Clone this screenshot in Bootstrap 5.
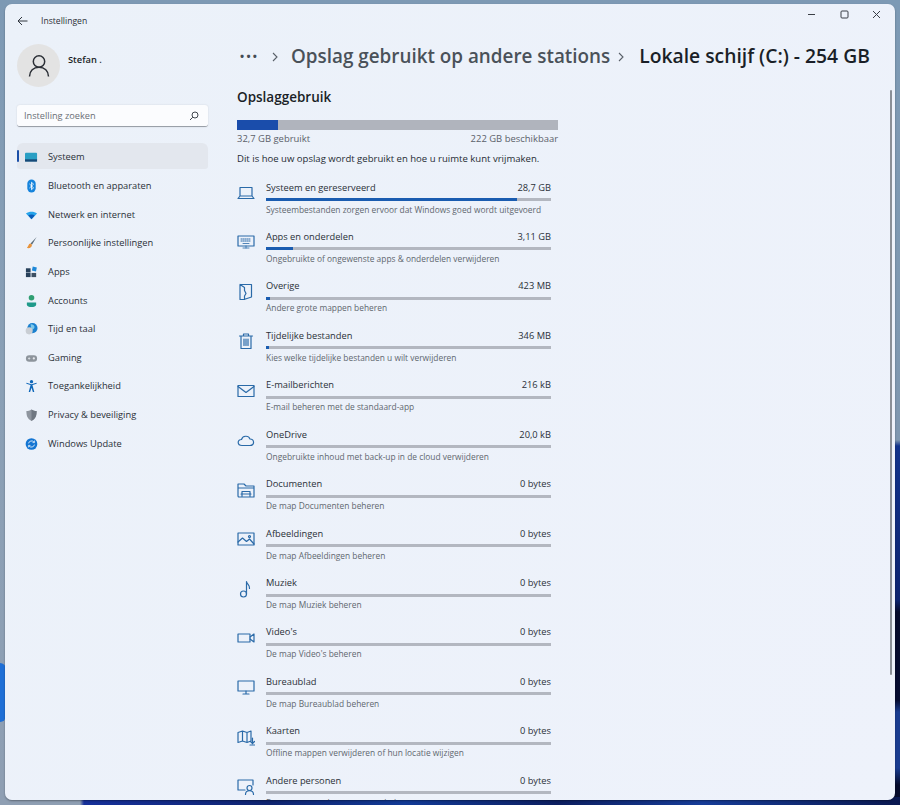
<!DOCTYPE html>
<html lang="nl">
<head>
<meta charset="utf-8">
<title>Instellingen</title>
<link href="https://cdn.jsdelivr.net/npm/bootstrap@5.3.0/dist/css/bootstrap.min.css" rel="stylesheet">
<style>
html,body{height:805px;overflow:hidden}
body{font-family:"Open Sans","Liberation Sans",sans-serif;color:#1c2430;background:linear-gradient(180deg,#7d99b4 0,#8aa0b6 45%,#8f9fb3 100%);position:relative}
.desk-right{position:absolute;right:0;top:0;bottom:0;width:12px;background:linear-gradient(180deg,#7d9ab5 0,#8098b0 440px,#12338c 446px,#0d2470 600px,#050a2a 612px,#060c30 700px,#1a3c90 712px,#1a3c90 768px,#050a2a 785px)}
.desk-bottom{position:absolute;left:0;right:0;bottom:0;height:8px;background:linear-gradient(90deg,#8f9fb3 0,#8f9fb3 80px,#16309a 84px,#0f2470 30%,#123a96 45%,#0c1e60 62%,#163c98 78%,#0a1850 100%)}
.desk-arc{position:absolute;left:0;top:663px;width:6px;height:59px;background:#1f6fd6;border-radius:0 30px 30px 0}
.win{position:absolute;left:5px;top:4px;width:890px;height:796px;background:linear-gradient(120deg,#ebf1f9,#eef2fb);border-radius:7px;overflow:hidden;box-shadow:0 1px 2px rgba(0,0,0,.35);display:flex;flex-direction:column}
.titlebar{height:26px;flex:none;padding-left:12px;padding-top:8px}
.apptitle{font-size:8.6px;color:#2b3038;margin-left:13px}
.winbtns{position:absolute;right:2px;top:0;display:flex}
.winbtn{width:32.5px;height:20px;display:flex;align-items:center;justify-content:center}
.winbody{flex:1 1 auto;display:flex;min-height:0}
.side{width:232px;flex:none;padding-left:12px}
.profile{margin-top:14px}
.avatar{width:43px;height:43px;border-radius:50%;background:#e3e3e3;display:flex;align-items:center;justify-content:center;flex:none}
.uname{font-size:9.3px;font-weight:600;color:#1a1f27;margin-left:8px;margin-top:-12px}
.search{width:191px;height:22px;margin-top:18px;background:#fbfcfe;border-radius:3px;border-bottom:1px solid #9aa0a8;box-shadow:0 0 2px rgba(0,0,0,.12);font-size:9.2px;color:#6a6f76;padding:0 9px 0 7px}
.navlist{margin-top:16px;width:191px;--bs-list-group-bg:transparent;--bs-list-group-border-width:0;overflow:visible}
.navitem{height:28.65px;display:flex;align-items:center;font-size:9.3px;color:#2a3038;padding:0 0 0 8px;border-radius:3px;position:relative;background:transparent}
.navitem.act{background:#e3e7ee;height:26px;margin-bottom:2.65px;padding-top:2px}
.navitem.act::before{content:"";position:absolute;left:0;top:7px;width:2px;height:12px;background:#1b4fa8;border-radius:1px}
.navico{width:13px;height:14px;flex:none;margin-right:10px;display:block}
.mainp{flex:1 1 auto;position:relative;min-width:0}
.crumb{height:33px;margin-top:10px;font-weight:600;white-space:nowrap;color:#4a5159}
.crumb-a{font-size:18.85px}
.crumb-b{font-size:19.3px;color:#1a1f27}
.dots{font-size:11px;font-weight:700;letter-spacing:2.3px;color:#444b54;width:25px;margin-left:3px;margin-right:7px}
.sep{margin-right:13px;flex:none}
.sep2{margin-left:8px;margin-right:15px;flex:none}
.h-sec{font-size:13.5px;font-weight:600;color:#1a1f27;margin:14px 0 0;line-height:20px}
.wrap{width:321px}
.capbar{--bs-progress-height:10px;--bs-progress-bg:#b0b4bd;--bs-progress-bar-bg:#1a4dab;--bs-progress-border-radius:0;margin-top:13px}
.capline{font-size:9.45px;color:#5b616a;line-height:13px;margin-top:1.5px}
.intro{font-size:9.55px;color:#262c34;margin:7.5px 0 0;line-height:13px;white-space:nowrap}
.rows{margin-top:15.5px}
.urow{display:flex;height:49.45px}
.uico{width:18px;height:18px;flex:none;margin:3.5px 11px 0 0;display:block}
.ubody{width:285px}
.utop{font-size:9.3px;line-height:13px;color:#2a3038;display:flex;justify-content:space-between}
.ubar{--bs-progress-height:3px;--bs-progress-bg:#b3b7c0;--bs-progress-bar-bg:#1a5cb0;--bs-progress-border-radius:0;margin-top:4.5px}
.udesc{font-size:8.4px;line-height:11px;color:#61676f;margin-top:2.5px;white-space:nowrap}
.sbar{position:absolute;right:3px;top:60px;width:2px;height:585px;background:#8a8f97;border-radius:1px}
svg.st{fill:none;stroke:#2a6aa8;stroke-width:1.2;stroke-linejoin:round;stroke-linecap:round}
</style>
</head>
<body>
<div class="desk-right"></div>
<div class="desk-bottom"></div>
<div class="desk-arc"></div>
<div class="win">
  <div class="titlebar d-flex align-items-center">
    <svg width="11" height="10" viewBox="0 0 11 10" fill="none" stroke="#30363e" stroke-width="1"><path d="M10.500 5H1M5 1 1 5l4 4"/></svg>
    <span class="apptitle">Instellingen</span>
  </div>
  <div class="winbtns">
    <div class="winbtn"><svg width="9" height="9" viewBox="0 0 9 9" stroke="#3a3f46" stroke-width="1"><path d="M1 4.500h7"/></svg></div>
    <div class="winbtn"><svg width="9" height="9" viewBox="0 0 9 9" fill="none" stroke="#3a3f46" stroke-width="1"><rect x="1" y="1" width="7" height="7" rx="1"/></svg></div>
    <div class="winbtn"><svg width="9" height="9" viewBox="0 0 9 9" stroke="#3a3f46" stroke-width="1"><path d="m1 1 7 7M8 1 1 8"/></svg></div>
  </div>
  <div class="winbody">
    <aside class="side">
      <div class="d-flex align-items-center profile">
        <div class="avatar"><svg width="22" height="24" viewBox="0 0 22 24" fill="none" stroke="#2b2f36" stroke-width="1.500"><circle cx="11" cy="7.500" r="5.700"/><path d="M1.500 22.500c0-5.500 4-9.300 9.500-9.300s9.500 3.800 9.500 9.300"/></svg></div>
        <div class="uname">Stefan .</div>
      </div>
      <div class="search d-flex align-items-center justify-content-between">
        <span>Instelling zoeken</span>
        <svg width="10" height="10" viewBox="0 0 10 10" fill="none" stroke="#40464e" stroke-width="1"><circle cx="6" cy="4" r="3"/><path d="M3.800 6.200 1 9"/></svg>
      </div>
      <div class="list-group navlist">
        <div class="list-group-item navitem act">
          <svg class="navico" viewBox="0 0 14 14"><rect x="0" y="2.500" width="13" height="9" rx="1" fill="#2a9fc4"/><rect x="0" y="9.500" width="13" height="2.500" fill="#174a78"/></svg>Systeem</div>
        <div class="list-group-item navitem">
          <svg class="navico" viewBox="0 0 14 14"><rect x="2.500" y="0" width="9" height="14" rx="4.500" fill="#1583dc"/><path d="M4.800 4.800 9.200 9 7 11V3l2.200 2L4.800 9.200" fill="none" stroke="#fff" stroke-width=".9"/></svg>Bluetooth en apparaten</div>
        <div class="list-group-item navitem">
          <svg class="navico" viewBox="0 0 14 14"><path d="M1 5.500C4.500 2.800 9.500 2.800 13 5.500L7 11.500z" fill="#27a4ea"/><path d="M3.500 7.500c2-1.300 5-1.300 7 0L7 11.500z" fill="#0c5cb8"/></svg>Netwerk en internet</div>
        <div class="list-group-item navitem">
          <svg class="navico" viewBox="0 0 14 14"><path d="M12.500 .5 6 7.500 7.500 9z" fill="#5a6b78"/><path d="M5.800 7.500C3.500 8 4 10 2 12.500c3 .5 5.500-.5 5.500-3.500z" fill="#e8943c"/></svg>Persoonlijke instellingen</div>
        <div class="list-group-item navitem">
          <svg class="navico" viewBox="0 0 14 14"><rect x="1" y="3" width="5" height="4.500" fill="#27405a"/><rect x="1" y="8" width="5" height="4.500" fill="#27405a"/><rect x="7" y="8" width="5" height="4.500" fill="#3c4f63"/><rect x="8" y="1.500" width="4.500" height="4.500" transform="rotate(12 10 3)" fill="#1e88d8"/></svg>Apps</div>
        <div class="list-group-item navitem">
          <svg class="navico" viewBox="0 0 14 14"><circle cx="7" cy="3.500" r="3" fill="#2f9e72"/><path d="M2 8.500h10v2.500c0 1.500-2.500 2.500-5 2.500s-5-1-5-2.500z" fill="#1f9a8a"/></svg>Accounts</div>
        <div class="list-group-item navitem">
          <svg class="navico" viewBox="0 0 14 14"><circle cx="8" cy="6" r="5.500" fill="#1a80cf"/><path d="M6 2c3 0 5 1.800 4 4-.5 1.500-2.500 1-3 3z" fill="#7cc8ea"/><circle cx="4.500" cy="9" r="3.800" fill="#c9ced4"/></svg>Tijd en taal</div>
        <div class="list-group-item navitem">
          <svg class="navico" viewBox="0 0 14 14"><rect x="1" y="4" width="12" height="7" rx="3.500" fill="#8d949c"/><path d="M3.200 7.500h2.500M4.500 6.300v2.500" stroke="#e6e9ee" stroke-width=".8"/><circle cx="9.500" cy="7.500" r="1.200" fill="#e6e9ee"/></svg>Gaming</div>
        <div class="list-group-item navitem">
          <svg class="navico" viewBox="0 0 14 14"><circle cx="7" cy="2.300" r="1.800" fill="#0d66b8"/><path d="M1.500 4.500 6 6 4 13.500h1.500L7 9l1.500 4.500H10L8 6l4.500-1.500V3.500L7 5 1.500 3.500z" fill="#0d66b8"/></svg>Toegankelijkheid</div>
        <div class="list-group-item navitem">
          <svg class="navico" viewBox="0 0 14 14"><path d="M7 1c2 1.300 3.500 1.700 5.500 1.800 0 5-1 8.500-5.500 10.700C2.500 11.300 1.500 7.800 1.500 2.800 3.500 2.700 5 2.300 7 1z" fill="#8e959e"/><path d="M7 1c2 1.300 3.500 1.700 5.500 1.800 0 5-1 8.500-5.500 10.700z" fill="#6f7781"/></svg>Privacy &amp; beveiliging</div>
        <div class="list-group-item navitem">
          <svg class="navico" viewBox="0 0 14 14"><circle cx="7" cy="7" r="6.300" fill="#1475d2"/><path d="M3.800 6.300A3.400 3.400 0 0 1 9.800 5M10.200 7.700A3.400 3.400 0 0 1 4.200 9" fill="none" stroke="#dcebf8" stroke-width="1"/><path d="M10.300 3.300v2.200H8.100M3.700 10.700V8.500h2.200" fill="none" stroke="#dcebf8" stroke-width=".9"/></svg>Windows Update</div>
      </div>
    </aside>
    <main class="mainp">
      <div class="crumb d-flex align-items-center">
        <span class="dots">•••</span>
        <svg class="sep" width="6" height="10" viewBox="0 0 6 10" fill="none" stroke="#5a616a" stroke-width="1.100"><path d="m1 1 4 4-4 4"/></svg>
        <span class="crumb-a">Opslag gebruikt op andere stations</span>
        <svg class="sep2" width="6" height="10" viewBox="0 0 6 10" fill="none" stroke="#5a616a" stroke-width="1.100"><path d="m1 1 4 4-4 4"/></svg>
        <span class="crumb-b">Lokale schijf (C:) - 254 GB</span>
      </div>
      <h2 class="h-sec">Opslaggebruik</h2>
      <div class="wrap">
        <div class="progress capbar"><div class="progress-bar" style="width:12.900%"></div></div>
        <div class="capline d-flex justify-content-between"><span>32,7 GB gebruikt</span><span>222 GB beschikbaar</span></div>
        <p class="intro">Dit is hoe uw opslag wordt gebruikt en hoe u ruimte kunt vrijmaken.</p>
      </div>
      <div class="rows">
        <div class="urow"><svg class="uico st" viewBox="0 0 18 18"><path d="M3 3.500h12v8.500H3zM3 12l-2 2.500h16L15 12"/></svg><div class="ubody"><div class="utop"><span>Systeem en gereserveerd</span><span>28,7 GB</span></div><div class="progress ubar"><div class="progress-bar" style="width:88%"></div></div><div class="udesc">Systeembestanden zorgen ervoor dat Windows goed wordt uitgevoerd</div></div></div>
        <div class="urow"><svg class="uico st" viewBox="0 0 18 18"><rect x="1" y="3" width="16" height="10"/><path d="M4 6h10M4 8h10" stroke-width="1" stroke-dasharray="1 1"/><path d="M6 10.500h6M6 15h6M9 13v2" stroke-width=".8"/></svg><div class="ubody"><div class="utop"><span>Apps en onderdelen</span><span>3,11 GB</span></div><div class="progress ubar"><div class="progress-bar" style="width:9.500%"></div></div><div class="udesc">Ongebruikte of ongewenste apps &amp; onderdelen verwijderen</div></div></div>
        <div class="urow"><svg class="uico st" viewBox="0 0 18 18"><path d="M3 1.500h11.500v12.500L7 16.500H3zM3 1.500 7.500 4.500v3l1.500 3-1.500 2.500v3.500"/></svg><div class="ubody"><div class="utop"><span>Overige</span><span>423 MB</span></div><div class="progress ubar"><div class="progress-bar" style="width:1.300%"></div></div><div class="udesc">Andere grote mappen beheren</div></div></div>
        <div class="urow"><svg class="uico st" viewBox="0 0 18 18"><path d="M2.500 4h13M6.500 4V2h5v2M4 4v12.500h10V4M7 7v6.500M9 7v6.500M11 7v6.500"/></svg><div class="ubody"><div class="utop"><span>Tijdelijke bestanden</span><span>346 MB</span></div><div class="progress ubar"><div class="progress-bar" style="width:1%"></div></div><div class="udesc">Kies welke tijdelijke bestanden u wilt verwijderen</div></div></div>
        <div class="urow"><svg class="uico st" viewBox="0 0 18 18"><rect x="1" y="3.500" width="16" height="11"/><path d="m1 4.500 8 6 8-6"/></svg><div class="ubody"><div class="utop"><span>E-mailberichten</span><span>216 kB</span></div><div class="progress ubar"><div class="progress-bar" style="width:0"></div></div><div class="udesc">E-mail beheren met de standaard-app</div></div></div>
        <div class="urow"><svg class="uico st" viewBox="0 0 18 18"><path d="M5 14.500c-5 0-5-6-.5-6 1-4 7-4.500 8.500-.5 4.500 0 5 6.500 0 6.500z"/></svg><div class="ubody"><div class="utop"><span>OneDrive</span><span>20,0 kB</span></div><div class="progress ubar"><div class="progress-bar" style="width:0"></div></div><div class="udesc">Ongebruikte inhoud met back-up in de cloud verwijderen</div></div></div>
        <div class="urow"><svg class="uico st" viewBox="0 0 18 18"><path d="M1 3h6l2 2h8v11H2a1 1 0 0 1-1-1zM1 7h16M5 15v-4.500h8V15M4 13h10"/></svg><div class="ubody"><div class="utop"><span>Documenten</span><span>0 bytes</span></div><div class="progress ubar"><div class="progress-bar" style="width:0"></div></div><div class="udesc">De map Documenten beheren</div></div></div>
        <div class="urow"><svg class="uico st" viewBox="0 0 18 18"><rect x="1" y="3" width="16" height="12"/><path d="m1 12 4.500-4 4 3.500 3-2.500 4.500 5"/><circle cx="12.500" cy="6.500" r="1"/></svg><div class="ubody"><div class="utop"><span>Afbeeldingen</span><span>0 bytes</span></div><div class="progress ubar"><div class="progress-bar" style="width:0"></div></div><div class="udesc">De map Afbeeldingen beheren</div></div></div>
        <div class="urow"><svg class="uico st" viewBox="0 0 18 18"><circle cx="6.500" cy="14" r="3"/><path d="M9.500 14V1.500c.5 3 3.500 3.500 3 7"/></svg><div class="ubody"><div class="utop"><span>Muziek</span><span>0 bytes</span></div><div class="progress ubar"><div class="progress-bar" style="width:0"></div></div><div class="udesc">De map Muziek beheren</div></div></div>
        <div class="urow"><svg class="uico st" viewBox="0 0 18 18"><rect x="1" y="5" width="12" height="8"/><path d="M13 8l4-3v8l-4-3"/></svg><div class="ubody"><div class="utop"><span>Video's</span><span>0 bytes</span></div><div class="progress ubar"><div class="progress-bar" style="width:0"></div></div><div class="udesc">De map Video's beheren</div></div></div>
        <div class="urow"><svg class="uico st" viewBox="0 0 18 18"><rect x="1" y="3" width="16" height="10"/><path d="M9 13v3M6 16h6"/></svg><div class="ubody"><div class="utop"><span>Bureaublad</span><span>0 bytes</span></div><div class="progress ubar"><div class="progress-bar" style="width:0"></div></div><div class="udesc">De map Bureaublad beheren</div></div></div>
        <div class="urow"><svg class="uico st" viewBox="0 0 18 18"><path d="M1 4.500 5.500 3l4.500 1.500L14 3v10l-4 1.500L5.500 13 1 14.500zM5.500 3v10M10 4.500v10M15.500 10v5M13.500 13.500l2 2 2-2M13 17h5"/></svg><div class="ubody"><div class="utop"><span>Kaarten</span><span>0 bytes</span></div><div class="progress ubar"><div class="progress-bar" style="width:0"></div></div><div class="udesc">Offline mappen verwijderen of hun locatie wijzigen</div></div></div>
        <div class="urow"><svg class="uico st" viewBox="0 0 18 18"><path d="M8 13H1V3h15v5"/><circle cx="12.500" cy="11" r="2.500"/><path d="M8.500 17.500c0-5 8-5 8 0"/></svg><div class="ubody"><div class="utop"><span>Andere personen</span><span>0 bytes</span></div><div class="progress ubar"><div class="progress-bar" style="width:0"></div></div><div class="udesc">De map van andere personen beheren</div></div></div>
      </div>
      <div class="sbar"></div>
    </main>
  </div>
</div>
<script src="https://cdn.jsdelivr.net/npm/bootstrap@5.3.0/dist/js/bootstrap.bundle.min.js"></script>
</body>
</html>
